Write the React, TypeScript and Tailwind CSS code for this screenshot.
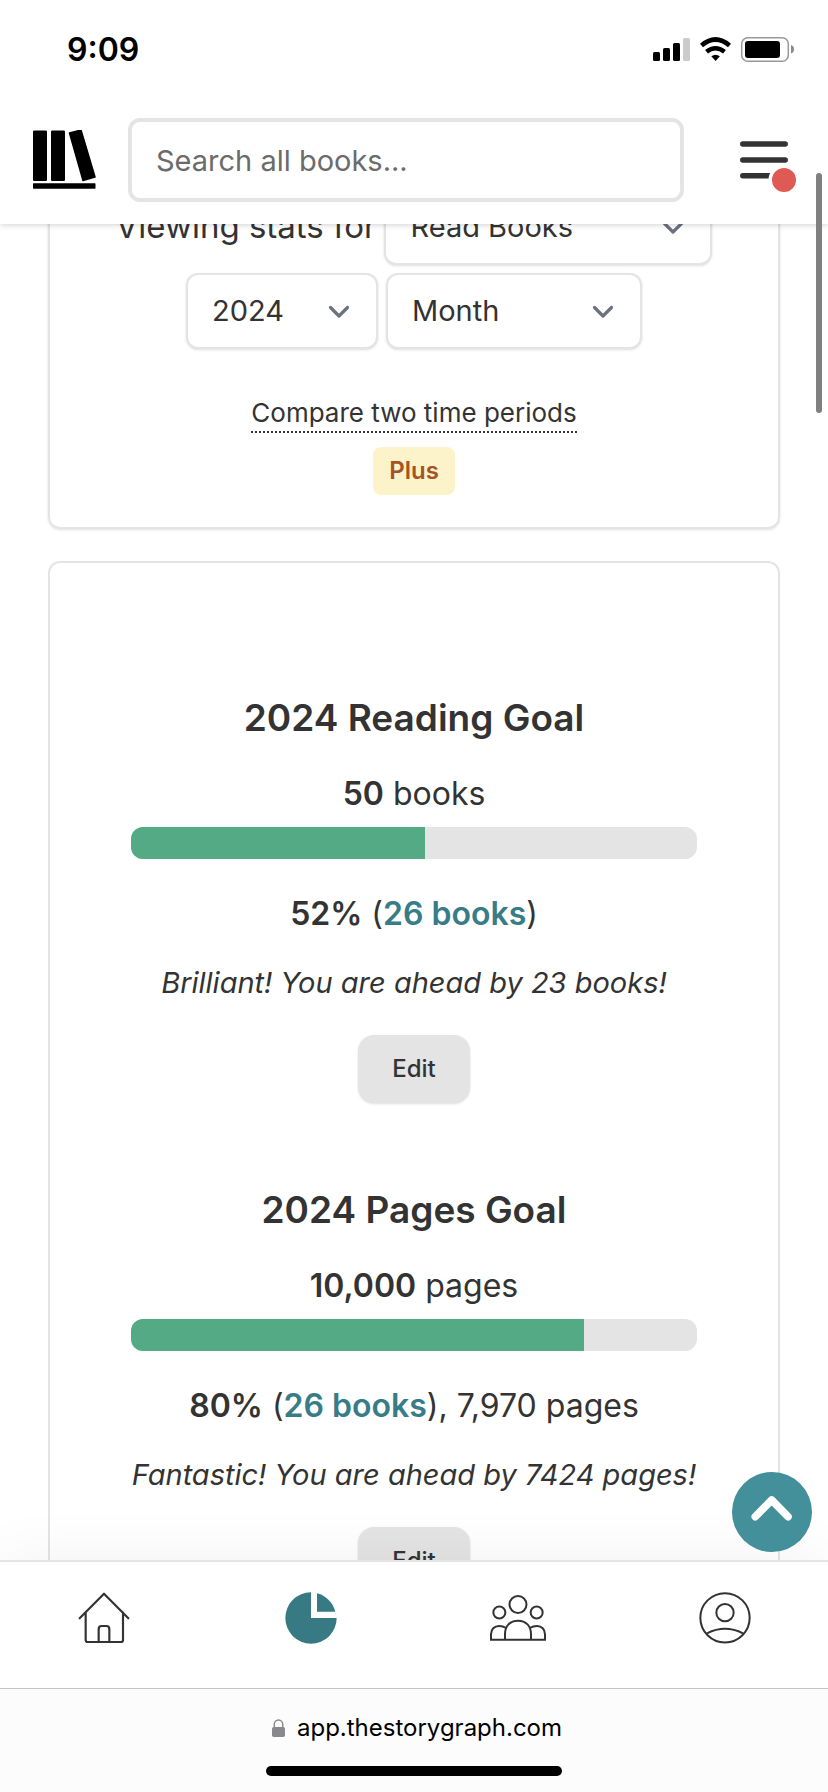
import { useLayoutEffect, useRef } from "react";

const font = "font-['Inter','Liberation_Sans',sans-serif]";

function StatusBar() {
  return (
    <div className="flex h-24 items-center justify-between pt-1 pl-[67px] pr-8 text-black">
      <span className="text-[32px] leading-10 font-semibold">9:09</span>
      <svg width="144" height="28" viewBox="652 36 144 28" aria-hidden="true">
        <rect x="653" y="52" width="7" height="9" rx="1.5" />
        <rect x="663" y="48" width="7" height="13" rx="1.5" />
        <rect x="673" y="43" width="7" height="18" rx="1.5" />
        <rect x="683" y="38" width="7" height="23" rx="1.5" fill="#cbcbcb" />
        <path d="M701.500 45.500Q715.500 33.500 729.500 45.500" fill="none" stroke="#000" strokeWidth="4.600" />
        <path d="M706.500 51.800Q715.500 44.500 724.500 51.800" fill="none" stroke="#000" strokeWidth="4.400" />
        <path d="M711.300 56.300Q715.500 53 719.900 56.300L715.600 61Z" />
        <rect x="741.700" y="37.700" width="46.600" height="23.600" rx="6" fill="none" stroke="#999" strokeWidth="1.500" />
        <rect x="745" y="41" width="35" height="17" rx="3" />
        <path d="M791 45q3 1 3 4.300t-3 4.200z" fill="#8a8a8a" />
      </svg>
    </div>
  );
}

function TopBar() {
  return (
    <div className="flex h-32 items-center gap-8 px-8">
      <a href="#home" aria-label="Home" className="shrink-0">
        <svg width="64" height="60" viewBox="32 130 64 60" aria-hidden="true">
          <rect x="33" y="130.500" width="14" height="50.500" rx="1.200" />
          <rect x="51" y="130.500" width="14" height="50.500" rx="1.200" />
          <path
            d="M69.500 133L81 130L95 177L83 180.500Z"
            stroke="#000"
            strokeWidth="1.500"
            strokeLinejoin="round"
          />
          <rect x="33" y="183.300" width="62.500" height="5.400" rx=".6" />
        </svg>
      </a>
      <input
        type="search"
        aria-label="Search all books"
        placeholder="Search all books..."
        className="h-[84px] min-w-0 flex-1 rounded-xl border-4 border-[#e4e4e4] bg-white px-6 text-[29px] placeholder:text-[#6b6b6b]"
      />
      <button type="button" aria-label="Menu" className="ml-6 shrink-0">
        <svg width="56" height="64" viewBox="740 128 56 64" aria-hidden="true">
          <g stroke="#333" strokeWidth="5.500" strokeLinecap="round">
            <path d="M742.800 144H785.200M742.800 160H785.200M742.800 175.800H772" />
          </g>
          <circle cx="784" cy="180" r="15.500" fill="#fff" />
          <circle cx="784" cy="180" r="12" fill="#df5a55" />
        </svg>
      </button>
    </div>
  );
}

function Select({ label, value, width }: { label: string; value: string; width: string }) {
  return (
    <div className={`relative ${width}`}>
      <select
        aria-label={label}
        defaultValue={value}
        className="h-[76px] w-full appearance-none rounded-xl border-2 border-[#e4e4e4] bg-white px-6 text-[29px] shadow-sm"
      >
        <option>{value}</option>
      </select>
      <svg
        className="pointer-events-none absolute top-8 right-7"
        width="22"
        height="14"
        viewBox="0 0 22 14"
        fill="none"
        stroke="#6b7280"
        strokeWidth="3.200"
        strokeLinecap="round"
        strokeLinejoin="round"
        aria-hidden="true"
      >
        <path d="M2.500 2.500L11 11L19.500 2.500" />
      </svg>
    </div>
  );
}

function Filters() {
  return (
    <section className="flex flex-col items-center rounded-xl border-2 border-[#e4e4e4] py-8 shadow-sm">
      <div className="flex items-center gap-2">
        <span className="text-[33px] whitespace-nowrap">Viewing stats for</span>
        <Select label="Shelf" value="Read Books" width="w-[328px]" />
      </div>
      <div className="mt-2 flex gap-2">
        <Select label="Year" value="2024" width="w-48" />
        <Select label="Period" value="Month" width="w-64" />
      </div>
      <a href="#compare" className="mt-12 border-b-2 border-dotted border-[#333] pb-0.5 text-[26px] leading-8">
        Compare two time periods
      </a>
      <a
        href="#plus"
        className="mt-3.5 flex h-12 items-center rounded-lg bg-[#fdf3cb] px-4 text-2xl font-semibold text-[#a85325]"
      >
        Plus
      </a>
    </section>
  );
}

type GoalProps = {
  title: string;
  target: string;
  unit: string;
  percent: number;
  extra?: string;
  message: string;
};

function Goal({ title, target, unit, percent, extra, message }: GoalProps) {
  return (
    <article className="flex flex-col items-center">
      <h2 className="text-[37px] leading-[48px] font-semibold">{title}</h2>
      <p className="mt-7 text-[32px] leading-[48px]">
        <b className="font-semibold">{target}</b> {unit}
      </p>
      <div
        role="progressbar"
        aria-label={title}
        aria-valuenow={percent}
        className="mt-[9px] h-8 w-full max-w-[566px] overflow-hidden rounded-xl bg-[#e4e4e4]"
      >
        <div className="h-full bg-[#55aa86]" style={{ width: `${percent}%` }} />
      </div>
      <p className="mt-[31px] text-[32px] leading-[48px]">
        <b className="font-semibold">{percent}%</b> (
        <a href="#books" className="font-semibold text-[#377c86]">
          26 books
        </a>
        ){extra}
      </p>
      <p className="mt-[25px] text-[29px] leading-10 whitespace-nowrap italic">{message}</p>
      <button type="button" className="mt-8 h-[68px] w-28 rounded-2xl bg-[#e4e4e4] text-2xl font-medium shadow-sm">
        Edit
      </button>
    </article>
  );
}

function TabBar() {
  const link = "flex flex-1 items-center justify-center";
  return (
    <nav
      aria-label="Main"
      className="relative flex h-32 shrink-0 border-t-2 border-[#e4e4e4] bg-white pb-3.5 shadow-[0_-4px_60px_rgba(0,0,0,0.05)]"
    >
      <a href="#home" aria-label="Home" className={link}>
        <svg
          width="52"
          height="52"
          viewBox="234 156 156 156"
          fill="none"
          stroke="#333"
          strokeWidth="6.500"
          strokeLinecap="round"
          strokeLinejoin="round"
        >
          <path d="M239 235L312 161L385 235M257 218V300Q257 306 263 306H363Q369 306 369 300V218M296 306V267Q296 258 305 258H319Q328 258 328 267V306" />
        </svg>
      </a>
      <a href="#stats" aria-label="Stats" className={link}>
        <svg width="52" height="52" viewBox="852 156 156 156" fill="#377a83">
          <path d="M930 157V234H1007A77 77 0 1 1 930 157Z" />
          <path d="M948 160A76 76 0 0 1 1003 215H948Z" />
        </svg>
      </a>
      <a href="#community" aria-label="Community" className={link}>
        <svg width="58" height="52" viewBox="207 456 174 156" fill="none" stroke="#333" strokeWidth="6">
          <circle cx="294" cy="493.500" r="25.500" />
          <circle cx="238" cy="517.500" r="18" />
          <circle cx="350" cy="517.500" r="18" />
          <path d="M213 599V583C213 568 223 558 237 558C245 558 252 560 258 564M375 599V583C375 568 365 558 351 558C343 558 336 560 330 564M255 599V582C255 558 270 542 294 542S333 558 333 582V599M210 599H378" />
        </svg>
      </a>
      <a href="#profile" aria-label="Profile" className={link}>
        <svg width="52" height="52" viewBox="834 456 156 156" fill="none" stroke="#333" strokeWidth="6">
          <circle cx="912" cy="533.500" r="74" />
          <circle cx="912" cy="518" r="26" />
          <path d="M858 580Q912 553 966 580" />
        </svg>
      </a>
    </nav>
  );
}

function BrowserBar() {
  return (
    <footer className="relative flex shrink-0 flex-col items-center border-t border-[#c4c4c6] bg-[#fcfcfc] pt-[23px] pb-4 text-black">
      <div className="flex items-center gap-3 pl-1.5">
        <svg width="13" height="18" viewBox="0 0 13 18" aria-hidden="true">
          <rect y="8" width="13" height="10" rx="1.800" fill="#88888d" />
          <path d="M2.300 9V5.300a4.200 4.400 0 0 1 8.400 0V9" fill="none" stroke="#88888d" strokeWidth="1.500" />
        </svg>
        <span className="text-2xl leading-8">app.thestorygraph.com</span>
      </div>
      <div className="mt-[22px] h-2.5 w-[296px] rounded-full bg-black" />
    </footer>
  );
}

export default function App() {
  const scroller = useRef<HTMLElement>(null);

  // Open part-way down the first card.
  useLayoutEffect(() => {
    if (scroller.current) scroller.current.scrollTop = 69;
  }, []);

  return (
    <div className={`relative flex h-screen flex-col bg-white text-[#333] ${font}`}>
      <header className="relative z-10 shrink-0 bg-white shadow-[0_1px_6px_rgba(0,0,0,0.18)]">
        <StatusBar />
        <TopBar />
      </header>
      <div className="relative flex min-h-0 flex-1 flex-col">
        <main
          ref={scroller}
          className="flex min-h-0 flex-1 flex-col gap-8 overflow-y-auto px-12 [scrollbar-width:none] *:shrink-0"
        >
          <Filters />
          <section className="flex flex-col gap-[83px] rounded-xl border-2 border-[#e4e4e4] px-6 pt-[131px] pb-16">
            <Goal
              title="2024 Reading Goal"
              target="50"
              unit="books"
              percent={52}
              message="Brilliant! You are ahead by 23 books!"
            />
            <Goal
              title="2024 Pages Goal"
              target="10,000"
              unit="pages"
              percent={80}
              extra=", 7,970 pages"
              message="Fantastic! You are ahead by 7424 pages!"
            />
          </section>
        </main>
        <button
          type="button"
          aria-label="Back to top"
          className="absolute right-4 bottom-2 z-10 size-20 rounded-full bg-[#438f9a]"
        >
          <svg
            viewBox="936 96 240 240"
            fill="none"
            stroke="#fff"
            strokeWidth="23"
            strokeLinecap="round"
            strokeLinejoin="round"
            aria-hidden="true"
          >
            <path d="M1006 230L1055 180L1104 230" />
          </svg>
        </button>
      </div>
      <TabBar />
      <BrowserBar />
      <div className="absolute top-[173px] right-1.5 z-20 h-60 w-1.5 rounded-full bg-[#808080]" />
    </div>
  );
}
